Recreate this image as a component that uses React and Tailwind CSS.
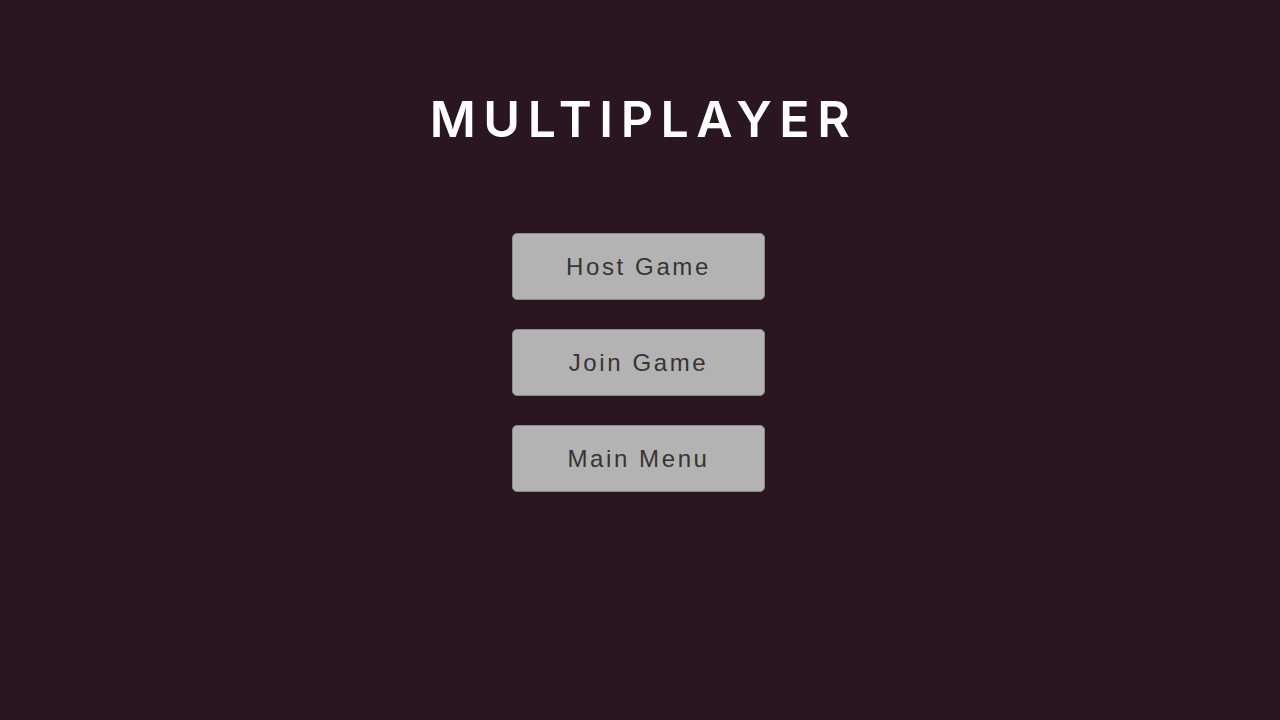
export default function App() {
  const btns = ["Host Game", "Join Game", "Main Menu"];
  return (
    <div className="w-[1280px] h-[720px] bg-[#2a1621] flex flex-col items-center overflow-hidden">
      <h1 className="mt-[94px] h-[50px] text-white text-[50px] font-semibold tracking-[7.5px] leading-none mr-[-7px]" style={{ fontFamily: "Inter, 'Liberation Sans', sans-serif" }}>
        MULTIPLAYER
      </h1>
      <div className="mt-[89px] flex flex-col gap-[29px] ml-[-3px]">
        {btns.map((b) => (
          <button key={b} className="w-[253px] h-[67px] rounded-[5px] bg-[#b3b3b3] border border-[#8e8a8c] text-[#363336] text-[24px] tracking-[2.6px] flex items-center justify-center" style={{ fontFamily: "'Liberation Sans', Arial, sans-serif" }}>
            {b}
          </button>
        ))}
      </div>
    </div>
  );
}
